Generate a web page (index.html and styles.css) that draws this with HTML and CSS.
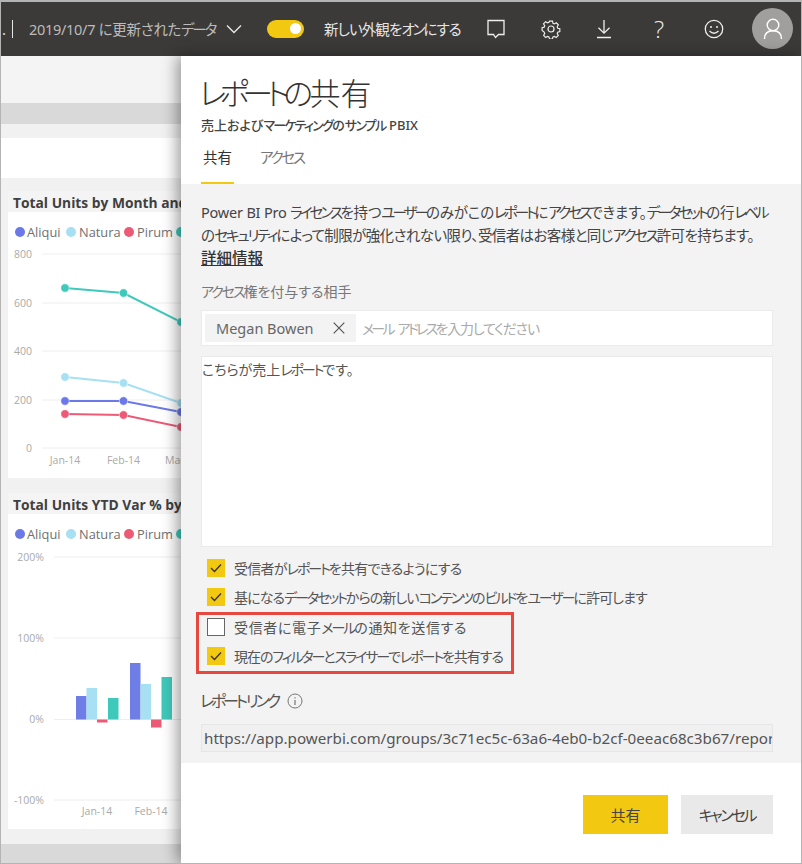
FILE: index.html
```html
<!DOCTYPE html>
<html lang="ja">
<head>
<meta charset="utf-8">
<title>レポートの共有</title>
<link rel="stylesheet" href="styles.css">
</head>
<body>
<div class="frame">
  <header class="topbar">
    <span class="crumb-dot">.</span>
    <span class="crumb-sep"></span>
    <span class="updated">2019/10/7 に更新された<span class="k">データ</span></span>
    <svg class="chevron" width="16" height="10" viewBox="0 0 16 10"><path d="M1 1.5 8 8.5 15 1.5" fill="none" stroke="#e6e6e6" stroke-width="1.4"/></svg>
    <span class="toggle"><span class="knob"></span></span>
    <span class="toggle-label">新しい外観を<span class="k">オン</span>にする</span>
    <svg class="ico ico-comment" width="20" height="22" viewBox="0 0 20 22"><path d="M2 2.5H18V16.5H12.5L9.5 19.5 7.5 16.5H2Z" fill="none" stroke="#eee" stroke-width="1.3"/></svg>
    <svg class="ico ico-gear" width="20" height="20" viewBox="0 0 20 20"><path d="M8.3 1.5h3.4l.5 2.5 1.5.7 2.2-1.3 2.3 2.4-1.3 2.1.6 1.6 2.3.6v3l-2.3.7-.6 1.5 1.2 2.1-2.3 2.3-2.1-1.2-1.5.6-.6 2.3H8.3l-.6-2.3-1.5-.6-2.1 1.2-2.3-2.3 1.2-2.1-.6-1.5L.1 11.9v-3l2.3-.6.6-1.6-1.3-2.1 2.3-2.4 2.2 1.3 1.500-.7z" transform="translate(1 .7) scale(.9)" fill="none" stroke="#eee" stroke-width="1.3"/><circle cx="10" cy="10" r="3" fill="none" stroke="#eee" stroke-width="1.2"/></svg>
    <svg class="ico ico-down" width="14" height="20" viewBox="0 0 14 20"><path d="M7 1V14M1.5 8.700 7 14.200 12.500 8.700M0 18.500H14" fill="none" stroke="#eee" stroke-width="1.3"/></svg>
    <span class="ico ico-help">?</span>
    <svg class="ico ico-smile" width="20" height="20" viewBox="0 0 20 20"><circle cx="10" cy="10" r="8.700" fill="none" stroke="#eee" stroke-width="1.300"/><circle cx="7" cy="8" r="1" fill="#eee"/><circle cx="13" cy="8" r="1" fill="#eee"/><path d="M5.500 12Q10 16.500 14.500 12" fill="none" stroke="#eee" stroke-width="1.300"/></svg>
    <span class="avatar"><svg width="20" height="22" viewBox="0 0 20 22"><circle cx="10" cy="7" r="5.800" fill="none" stroke="#fff" stroke-width="1.400"/><path d="M1.500 21C1.500 15.500 5 12.800 10 12.800S18.500 15.500 18.500 21" fill="none" stroke="#fff" stroke-width="1.400"/></svg></span>
  </header>

  <div class="workspace">
    <div class="report">
      <div class="band-light"></div>
      <div class="band-dark"></div>
      <div class="band-pale"></div>
      <div class="band-white"></div>

      <section class="card card-line">
        <h2 class="card-title">Total Units by Month and Manufacturer</h2>
        <svg class="chart" width="173" height="266" viewBox="8 212 173 266">
          <g class="grid">
            <path d="M42 254H181M42 303H181M42 351H181M42 400H181M42 448H181"/>
          </g>
          <g class="legend">
            <circle cx="20" cy="232" r="5" fill="#6b78e8"/><text x="27" y="237">Aliqui</text>
            <circle cx="71" cy="232" r="5" fill="#a6e0f2"/><text x="79" y="237">Natura</text>
            <circle cx="129" cy="232" r="5" fill="#ec5a76"/><text x="137" y="237">Pirum</text>
            <circle cx="181" cy="232" r="5" fill="#3fc9bb"/>
          </g>
          <g class="axis">
            <text x="14" y="258">800</text><text x="14" y="307">600</text><text x="14" y="355">400</text><text x="14" y="404">200</text><text x="26" y="452">0</text>
            <text x="65" y="464" class="mid">Jan-14</text><text x="123.500" y="464" class="mid">Feb-14</text><text x="165" y="464">Mar-14</text>
          </g>
          <g class="series" stroke="#3fc9bb" fill="#3fc9bb"><path d="M65 288 123.500 293 181 322"/><circle cx="65" cy="288" r="4.200"/><circle cx="123.500" cy="293" r="4.200"/><circle cx="181" cy="322" r="4.200"/></g>
          <g class="series" stroke="#a6e0f2" fill="#a6e0f2"><path d="M65 377 123.500 383 181 403"/><circle cx="65" cy="377" r="4.200"/><circle cx="123.500" cy="383" r="4.200"/><circle cx="181" cy="403" r="4.200"/></g>
          <g class="series" stroke="#6b78e8" fill="#6b78e8"><path d="M65 401H123.500L181 412"/><circle cx="65" cy="401" r="4.200"/><circle cx="123.500" cy="401" r="4.200"/><circle cx="181" cy="412" r="4.200"/></g>
          <g class="series" stroke="#ec5a76" fill="#ec5a76"><path d="M65 414 123.500 415 181 427"/><circle cx="65" cy="414" r="4.200"/><circle cx="123.500" cy="415" r="4.200"/><circle cx="181" cy="427" r="4.200"/></g>
        </svg>
      </section>

      <section class="card card-bar">
        <h2 class="card-title">Total Units YTD Var % by Month and Manufacturer</h2>
        <svg class="chart" width="173" height="315" viewBox="8 513 173 315">
          <g class="grid"><path d="M54 556H181M54 637H181M54 718.500H181M54 799H181"/></g>
          <g class="legend">
            <circle cx="20" cy="533" r="5" fill="#6b78e8"/><text x="27" y="538">Aliqui</text>
            <circle cx="71" cy="533" r="5" fill="#a6e0f2"/><text x="79" y="538">Natura</text>
            <circle cx="129" cy="533" r="5" fill="#ec5a76"/><text x="137" y="538">Pirum</text>
            <circle cx="181" cy="533" r="5" fill="#3fc9bb"/>
          </g>
          <g class="axis">
            <text x="44" y="560" class="end">200%</text><text x="44" y="641" class="end">100%</text><text x="44" y="722" class="end">0%</text><text x="44" y="803" class="end">-100%</text>
            <text x="97" y="814" class="mid">Jan-14</text><text x="151" y="814" class="mid">Feb-14</text>
          </g>
          <rect x="76" y="695" width="10.500" height="23.500" fill="#6f7de6"/>
          <rect x="86.500" y="687" width="10.500" height="31.500" fill="#a6e0f2"/>
          <rect x="97" y="718.500" width="10.500" height="3" fill="#ec5a76"/>
          <rect x="108" y="697" width="10.500" height="21.500" fill="#3fc9bb"/>
          <rect x="130" y="662" width="10.500" height="56.500" fill="#6f7de6"/>
          <rect x="140.500" y="683" width="10.500" height="35.500" fill="#a6e0f2"/>
          <rect x="151" y="718.500" width="10.500" height="8" fill="#ec5a76"/>
          <rect x="161.500" y="676" width="10.500" height="42.500" fill="#3fc9bb"/>
        </svg>
      </section>
      <div class="band-bottom"></div>
    </div>

    <aside class="panel">
      <div class="panel-head">
        <h1 class="panel-title"><span class="k-title">レポートの</span>共有</h1>
        <p class="panel-sub">売上および<span class="k">マーケティング</span>の<span class="k">サンプル</span> PBIX</p>
        <nav class="tabs">
          <span class="tab tab-active">共有</span>
          <span class="tab"><span class="k">アクセス</span></span>
        </nav>
      </div>
      <div class="panel-body">
        <p class="intro">
          <span class="line line-1">Power BI Pro <span class="k">ライセンス</span>を持つ<span class="k">ユーザー</span>のみがこの<span class="k">レポート</span>に<span class="k">アクセス</span>できます。<span class="k">データセット</span>の行<span class="k">レベル</span></span>
          <span class="line line-2">の<span class="k">セキュリティ</span>によって制限が強化されない限り、受信者はお客様と同じ<span class="k">アクセス</span>許可を持ちます。</span>
          <a class="more">詳細情報</a>
        </p>
        <div class="field-label"><span class="k">アクセス</span>権を付与する相手</div>
        <div class="people">
          <span class="chip">Megan Bowen<svg width="12" height="12" viewBox="0 0 12 12"><path d="M.7.7 11.300 11.300M11.300.7.7 11.300" stroke="#555" stroke-width="1.200"/></svg></span>
          <span class="placeholder"><span class="k">メール アドレス</span>を入力してください</span>
        </div>
        <div class="message">こちらが売上<span class="k">レポート</span>です。</div>
        <div class="checks">
          <label class="check"><span class="box on"><svg width="12" height="10" viewBox="0 0 12 10"><path d="M1 5 4.500 8.500 11 1.500" fill="none" stroke="#333" stroke-width="1.300"/></svg></span><span class="check-text t1">受信者が<span class="k">レポート</span>を共有できるようにする</span></label>
          <label class="check"><span class="box on"><svg width="12" height="10" viewBox="0 0 12 10"><path d="M1 5 4.500 8.500 11 1.500" fill="none" stroke="#333" stroke-width="1.300"/></svg></span><span class="check-text t2">基になる<span class="k">データセット</span>からの新しい<span class="k">コンテンツ</span>の<span class="k">ビルド</span>を<span class="k">ユーザー</span>に許可します</span></label>
          <div class="highlight">
            <label class="check"><span class="box"></span><span class="check-text t3">受信者に電子<span class="k">メール</span>の通知を送信する</span></label>
            <label class="check"><span class="box on"><svg width="12" height="10" viewBox="0 0 12 10"><path d="M1 5 4.500 8.500 11 1.500" fill="none" stroke="#333" stroke-width="1.300"/></svg></span><span class="check-text t4">現在の<span class="k">フィルター</span>と<span class="k">スライサー</span>で<span class="k">レポート</span>を共有する</span></label>
          </div>
        </div>
        <div class="link-label"><span class="k">レポート リンク</span><svg width="16" height="16" viewBox="0 0 16 16"><circle cx="8" cy="8" r="7" fill="none" stroke="#777" stroke-width="1"/><path d="M8 7V12M8 4.200V5.600" stroke="#777" stroke-width="1.200"/></svg></div>
        <div class="link-box"><span>https://app.powerbi.com/groups/3c71ec5c-63a6-4eb0-b2cf-0eeac68c3b67/reports/</span></div>
      </div>
      <div class="panel-foot">
        <button class="btn btn-primary">共有</button>
        <button class="btn"><span class="k">キャンセル</span></button>
      </div>
    </aside>
  </div>
</div>
</body>
</html>
```

FILE: styles.css
```css
* { box-sizing: border-box; }
html, body { margin: 0; padding: 0; }
body {
  width: 802px;
  height: 864px;
  overflow: hidden;
  background: #fff;
  font-family: "Noto Sans", "Noto Sans CJK JP", sans-serif;
  font-feature-settings: "palt";
  color: #444;
}
.frame {
  width: 802px;
  height: 864px;
  border: 1px solid #b4b4b4;
  border-top-width: 2px;
  display: flex;
  flex-direction: column;
  overflow: hidden;
}
.k { letter-spacing: -.15em; }

/* top bar */
.topbar {
  height: 54px;
  flex: none;
  background: #3b3a39;
  display: flex;
  align-items: center;
  color: #e6e6e6;
  padding-bottom: 1px;
}
.crumb-dot { margin-left: 1px; width: 10px; font-size: 15px; color: #ddd; }
.crumb-sep { width: 1px; height: 18px; background: #e6e6e6; }
.updated { margin-left: 16px; width: 189px; font-size: 14.500px; letter-spacing: -.3px; color: #bdbcbb; white-space: nowrap; }
.chevron { margin-left: 8px; }
.toggle {
  margin-left: 25px;
  width: 37px;
  height: 18px;
  border-radius: 9px;
  background: #f2c811;
  display: flex;
  align-items: center;
  justify-content: flex-end;
  padding-right: 3px;
}
.knob { width: 11px; height: 11px; border-radius: 50%; background: #fff; }
.toggle-label { margin-left: 20px; width: 137px; font-size: 14.500px; letter-spacing: -.9px; color: #e6e6e6; white-space: nowrap; }
.ico-comment { margin-left: 25px; }
.ico-gear { margin-left: 35px; }
.ico-down { margin-left: 36px; }
.ico-help { margin-left: 43px; width: 12px; font-size: 24px; font-family: "Open Sans", sans-serif; font-weight: 300; color: #eee; line-height: 1; }
.ico-smile { margin-left: 38px; }
.avatar {
  margin-left: 28px;
  width: 41px;
  height: 41px;
  border-radius: 50%;
  background: #a19f9d;
  display: flex;
  align-items: center;
  justify-content: center;
}

/* layout */
.workspace { flex: 1; display: flex; min-height: 0; position: relative; }

/* report canvas */
.report {
  width: 180px;
  flex: none;
  overflow: hidden;
  background: #f1f1f1;
  display: flex;
  flex-direction: column;
}
.band-light { height: 47px; flex: none; background: #f4f4f4; }
.band-dark { height: 21px; flex: none; background: #d9d9d9; }
.band-pale { height: 14px; flex: none; background: #f1f1f1; }
.band-white { height: 40px; flex: none; background: #fff; }
.card { margin-left: 7px; width: 173px; flex: none; }
.card-line { margin-top: 13px; }
.card-bar { margin-top: 15px; }
.card-title {
  margin: 0;
  height: 21px;
  padding-left: 5px;
  font-family: "Open Sans", sans-serif;
  font-size: 13.800px;
  line-height: 24px;
  font-weight: 700;
  color: #404040;
  white-space: nowrap;
  overflow: hidden;
  background: #f4f4f4;
}
.chart { display: block; background: #fff; }
.grid path { stroke: #eeeeee; stroke-width: 1; fill: none; }
.legend text { font-family: "Open Sans", sans-serif; font-size: 12.800px; fill: #707070; }
.axis text { font-family: "Open Sans", sans-serif; font-size: 10.500px; fill: #aaa; }
.axis .mid { text-anchor: middle; }
.axis .end { text-anchor: end; }
.series path { fill: none; stroke-width: 2; }
.series circle { stroke: #fff; stroke-width: .5; }
.band-bottom { margin-top: 15px; flex: 1; background: #d9d9d9; }

/* panel */
.panel {
  flex: 1;
  min-width: 0;
  position: relative;
  background: #fff;
  display: flex;
  flex-direction: column;
  box-shadow: -4px 0 14px rgba(0, 0, 0, .38);
}
.panel-head { height: 128px; flex: none; padding: 15px 0 0 20px; }
.panel-title { margin: 0 0 0 -2px; font-size: 31px; line-height: 44px; font-weight: 300; color: #333; white-space: nowrap; }
.k-title { letter-spacing: -.22em; margin-right: 3px; }
.panel-sub { margin: 1px 0 0; font-size: 13px; line-height: 18px; font-weight: 500; color: #444; }
.panel-sub .k { letter-spacing: -.13em; }
.tabs { display: flex; margin-top: 12px; gap: 26px; }
.tab { font-size: 14.500px; line-height: 22px; height: 38px; color: #777; }
.tab-active { width: 33px; text-align: center; color: #333; border-bottom: 2px solid #f2c811; }
.panel-body {
  flex: 1;
  min-height: 0;
  background: #f3f3f3;
  padding: 17px 28px 0 20px;
}
.intro { margin: 0; font-size: 14.500px; line-height: 23px; color: #444; }
.line { display: block; white-space: nowrap; }
.line-1 { letter-spacing: -.2px; }
.line-1 .k { letter-spacing: -.2em; }
.line-2 { letter-spacing: -.6px; }
.more { color: #333; font-size: 15.500px; font-weight: 500; text-decoration: underline; }
.field-label { margin-top: 12px; font-size: 14px; line-height: 20px; color: #777; }
.people {
  margin-top: 8px;
  height: 36px;
  background: #fff;
  border: 1px solid #eaeaea;
  padding: 3px;
  display: flex;
  align-items: stretch;
}
.chip {
  width: 151px;
  background: #f3f3f3;
  display: flex;
  align-items: center;
  justify-content: space-between;
  padding: 0 11px 0 11px;
  font-size: 14.500px;
  color: #666;
}
.placeholder { margin-left: 6px; align-self: center; font-size: 14px; letter-spacing: -1.200px; color: #aaa; }
.placeholder .k { letter-spacing: -.2em; word-spacing: 4px; }
.message {
  margin-top: 10px;
  height: 191px;
  background: #fff;
  border: 1px solid #eaeaea;
  padding: 3px 0;
  font-size: 14px;
  line-height: 20px;
  color: #555;
}
.checks { margin-top: 6px; }
.check {
  height: 29.500px;
  display: flex;
  align-items: center;
  font-size: 14px;
  color: #555;
  white-space: nowrap;
}
.t1 { letter-spacing: -.75px; }
.t2 { letter-spacing: -.9px; }
.t3 { letter-spacing: .65px; }
.t4 { letter-spacing: -1.050px; }
.box {
  width: 18px;
  height: 18px;
  margin: 0 9px 0 6px;
  flex: none;
  border: 1.500px solid #666;
  background: #fff;
  display: flex;
  align-items: center;
  justify-content: center;
}
.box.on { background: #f2c811; border: 0; }
.highlight {
  margin: 0 0 0 -5px;
  width: 318px;
  height: 62px;
  border: 3px solid #e8473f;
  padding: 0 0 0 2px;
}
.highlight .check:first-child { margin-top: -3px; }
.link-label {
  margin-top: 16px;
  font-size: 16px;
  line-height: 22px;
  color: #555;
  display: flex;
  align-items: center;
  gap: 9px;
}
.link-label .k { letter-spacing: -.2em; margin-left: -1px; }
.link-box {
  margin-top: 12px;
  height: 28px;
  background: #f0f0f0;
  border: 1px solid #e6e6e6;
  padding: 0 0 0 2px;
  font-size: 15.200px;
  line-height: 26px;
  color: #555;
  white-space: nowrap;
  overflow: hidden;
}
.panel-foot {
  height: 100px;
  flex: none;
  display: flex;
  justify-content: flex-end;
  padding: 32px 28px 0 0;
  gap: 13px;
}
.btn {
  width: 92px;
  height: 39px;
  border: 0;
  background: #e9e9e9;
  font-family: inherit;
  font-feature-settings: inherit;
  font-size: 15px;
  color: #444;
}
.btn-primary { width: 85px; background: #f2c811; }
```
